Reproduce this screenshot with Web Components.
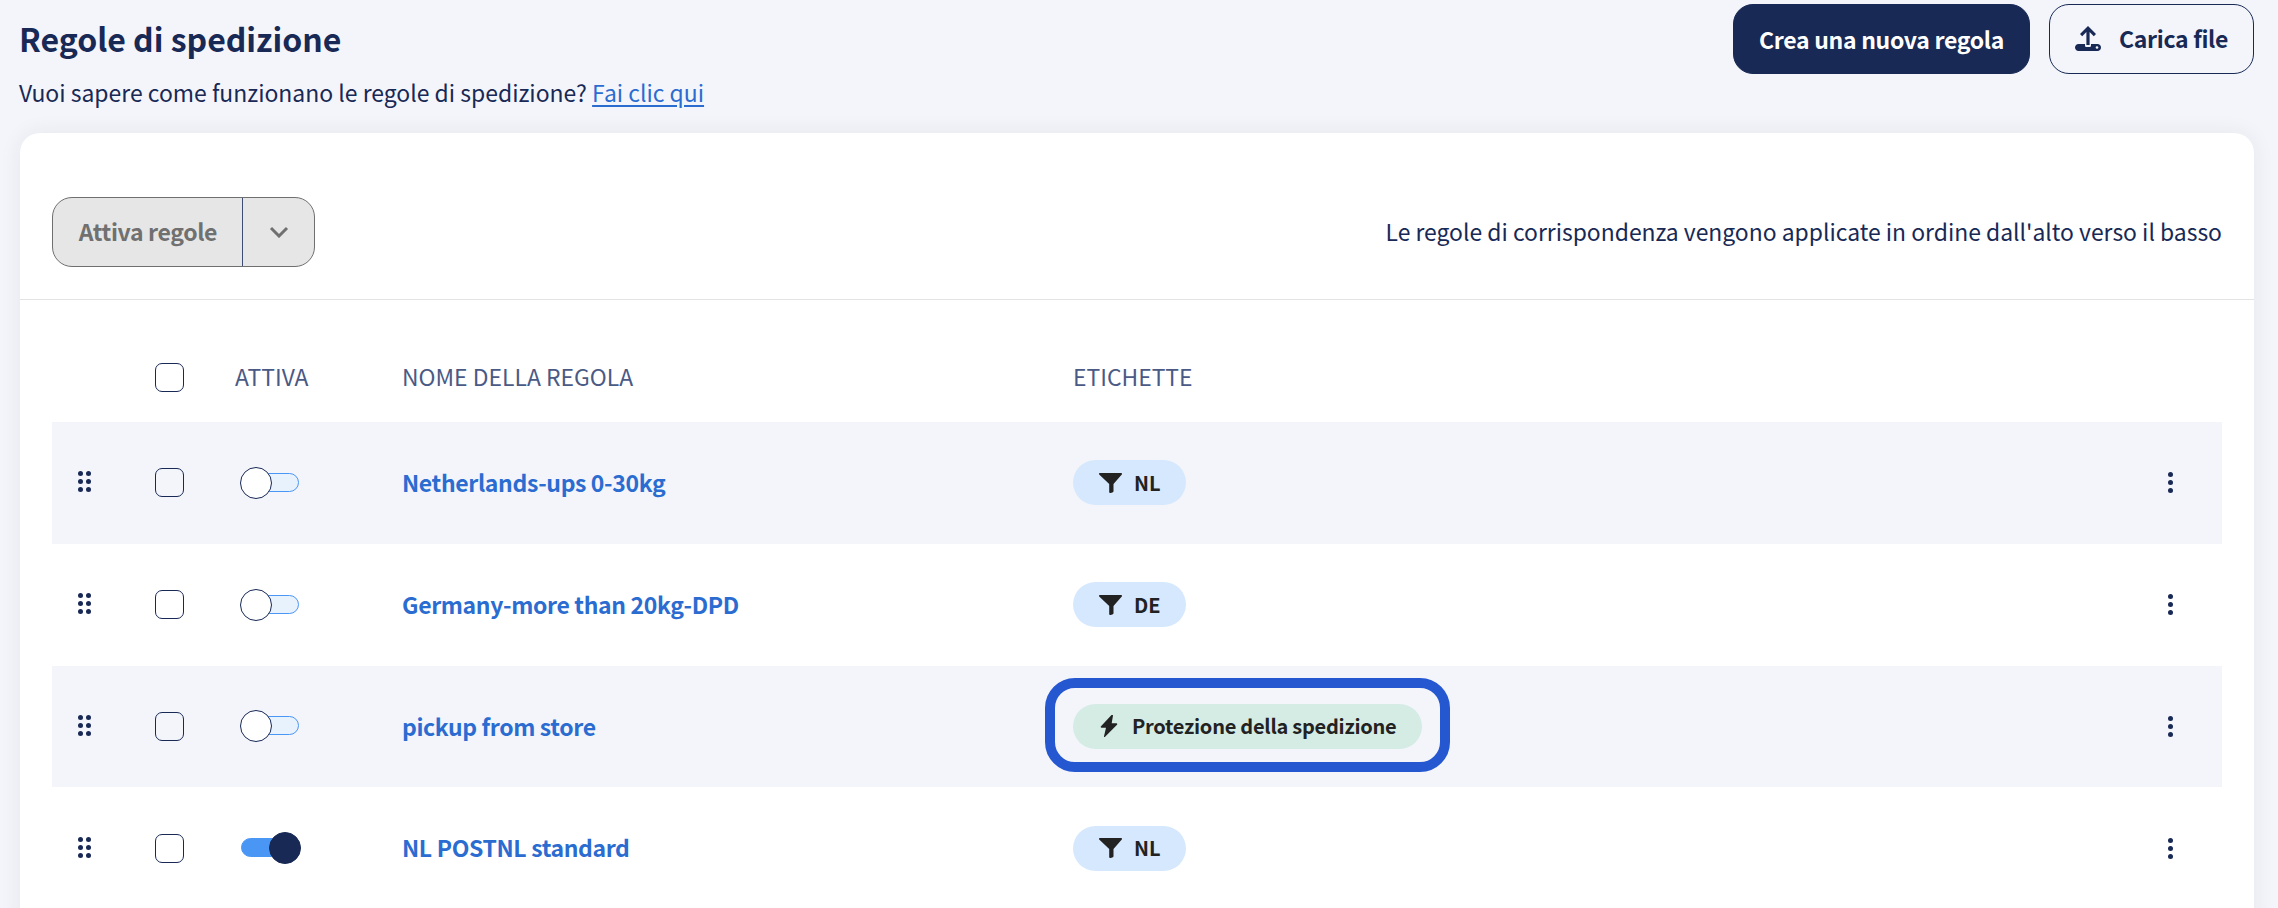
<!DOCTYPE html>
<html lang="it"><head><meta charset="utf-8"><title>Regole di spedizione</title>
<style>
html,body{margin:0;height:908px;overflow:hidden;background:#f4f5fa}
body{font-family:"Noto Sans CJK JP","Noto Sans CJK SC","Source Sans Pro","Noto Sans",sans-serif;color:#182955}
</style></head><body>
<rules-page>
  <page-header slot="header"></page-header>
  <rules-card>
    <rules-toolbar slot="toolbar"></rules-toolbar>
    <rules-head slot="head"></rules-head>
    <rule-row name="Netherlands-ups 0-30kg" tag="NL" shaded></rule-row>
    <rule-row name="Germany-more than 20kg-DPD" tag="DE"></rule-row>
    <rule-row name="pickup from store" tag="Protezione della spedizione" kind="bolt" shaded highlight></rule-row>
    <rule-row name="NL POSTNL standard" tag="NL" on></rule-row>
  </rules-card>
</rules-page>
<script>
const def=(name,css,html)=>customElements.define(name,class extends HTMLElement{
  connectedCallback(){ if(this.shadowRoot) return;
    const r=this.attachShadow({mode:'open'});
    r.innerHTML='<style>'+css+'</style>'+(typeof html==='function'?html(this):html);
  }
});
const GRID='grid-template-columns:103px 80px 167px 671px 1fr 104px;';

def('rules-page',':host{display:block;height:908px;overflow:hidden;padding:4px 24px 0 20px;box-sizing:border-box}',
 '<slot name="header"></slot><slot></slot>');

def('page-header',`:host{display:flex;justify-content:space-between;align-items:flex-start;height:129px}
 .t{margin-left:-1px}
 h1{margin:0;font-size:32px;line-height:44px;font-weight:700;color:#182955;margin-top:12px}
 p{margin:0;font-size:22.950px;line-height:32px;margin-top:16px;color:#182955}
 a{color:#2b6cd1;text-decoration:underline;text-underline-offset:3px}
 .acts{display:flex;gap:19px}`,
 `<div class="t"><h1>Regole di spedizione</h1><p>Vuoi sapere come funzionano le regole di spedizione? <a href="#">Fai clic qui</a></p></div>
  <div class="acts"><action-button primary>Crea una nuova regola</action-button><action-button upload>Carica file</action-button></div>`);

def('action-button',`:host{display:flex;align-items:center;justify-content:center;box-sizing:border-box;height:70px;border-radius:20px;font-size:23px;font-weight:700;line-height:30px;letter-spacing:-.3px;color:#182955;border:1.5px solid #182955}
 :host([primary]){background:#182955;color:#fff;width:297px}
 :host([upload]){width:205px;gap:18px;padding-bottom:3px}
 svg{width:26px;height:26px;flex:none;margin-top:3px}`,
 h=>(h.hasAttribute('upload')?`<svg viewBox="0 0 26 26"><path d="M13 0 5 8l2.200 2.200 4.200-4.100V19h3.200V6.100l4.200 4.100L21 8Z" fill="#182955"/><path d="M3.500 18H10v1.500c0 1 .8 1.500 1.500 1.500h3c.8 0 1.500-.5 1.500-1.500V18h6.500c1.900 0 3.500 1.500 3.500 3.500S24.400 25 22.500 25h-19C1.600 25 0 23.400 0 21.500S1.600 18 3.500 18Z" fill="#182955"/><circle cx="22" cy="21.500" r="1.300" fill="#f4f5fa"/></svg>`:'')+'<slot></slot>');

def('rules-card',`:host{display:block;background:#fff;border-radius:20px 20px 0 0;box-shadow:0 0 22px rgba(24,41,85,.07);height:800px;padding:0 32px;box-sizing:border-box}
 .rows{display:flex;flex-direction:column}`,
 '<slot name="toolbar"></slot><slot name="head"></slot><div class="rows"><slot></slot></div>');

def('rules-toolbar',`:host{display:flex;justify-content:space-between;align-items:center;height:167px;padding-top:64px;padding-bottom:33px;box-sizing:border-box;margin:0 -32px;padding-left:32px;padding-right:32px;border-bottom:1px solid #e3e3e3}
 .note{font-size:22.900px;line-height:32px;color:#182955;padding-bottom:1px}`,
 '<split-button>Attiva regole</split-button><span class="note">Le regole di corrispondenza vengono applicate in ordine dall\'alto verso il basso</span>');

def('split-button',`:host{display:flex;box-sizing:border-box;width:263px;height:70px;border:1.5px solid #6f6f6f;border-radius:20px;background:#e6e6e6;color:#707070;font-size:23px;font-weight:700;line-height:30px;letter-spacing:-.35px}
 .l{width:190px;display:flex;align-items:center;justify-content:center;border-right:1px solid #3d4c74;box-sizing:border-box;padding:0 0 2px 1px}
 .r{flex:1;display:flex;align-items:center;justify-content:center}
 svg{width:20px;height:12px}`,
 `<div class="l"><slot></slot></div><div class="r"><svg viewBox="0 0 20 12"><path d="M2 2l8 8 8-8" fill="none" stroke="#707070" stroke-width="3"/></svg></div>`);

def('rules-head',`:host{display:grid;${GRID}align-items:center;height:122px;padding-top:32px;box-sizing:border-box;font-size:22.900px;line-height:30px;color:#4a5a85}
 span{padding-bottom:2px}`,
 `<span></span><rule-check></rule-check><span>ATTIVA</span><span>NOME DELLA REGOLA</span><span>ETICHETTE</span><span></span>`);

def('rule-check',`:host{display:block;box-sizing:border-box;width:29px;height:29px;border:1.5px solid #182955;border-radius:7px}`,'');

def('rule-row',`:host{display:grid;${GRID}align-items:center;height:121.750px}
 :host([shaded]){background:#f4f5fa}
 .name{font-size:23px;line-height:32px;font-weight:700;letter-spacing:-.36px;color:#2b6cd1;padding-bottom:1.500px}
 .grip{padding-left:26px;display:flex;margin-bottom:2px}
 .tagcell{position:relative;display:flex}
 .mark{position:absolute;left:-28px;top:-26px;width:405px;height:94px;box-sizing:border-box;border:10px solid #2457d0;border-radius:30px;pointer-events:none}
 .kebab{justify-self:center}`,
 h=>`<div class="grip"><dot-grid cols="2"></dot-grid></div>
  <rule-check></rule-check>
  <rule-toggle ${h.hasAttribute('on')?'on':''}></rule-toggle>
  <span class="name">${h.getAttribute('name')}</span>
  <div class="tagcell"><rule-chip kind="${h.getAttribute('kind')||'filter'}">${h.getAttribute('tag')}</rule-chip>${h.hasAttribute('highlight')?'<div class="mark"></div>':''}</div>
  <dot-grid class="kebab" cols="1"></dot-grid>`);

def('dot-grid',`:host{display:inline-grid;grid-auto-rows:5px;row-gap:3px;column-gap:3px}
 i{display:block;width:5px;height:5px;border-radius:50%;background:#182955}`,
 h=>{const c=+h.getAttribute('cols');h.style.gridTemplateColumns=`repeat(${c},5px)`;return '<i></i>'.repeat(c*3)});

def('rule-toggle',`:host{display:block;position:relative;width:61px;height:32px;margin-left:5px}
 .t{position:absolute;left:1px;right:2px;top:6px;height:19px;box-sizing:border-box;border-radius:10px;border:1.5px solid #4a96f5;background:#e8f2fd}
 .k{position:absolute;left:0;top:0;width:32px;height:32px;box-sizing:border-box;border-radius:50%;border:1.5px solid #182955;background:#fff}
 :host([on]) .t{background:#4a96f5}
 :host([on]) .k{left:29px;background:#182955}`,
 '<div class="t"></div><div class="k"></div>');

def('rule-chip',`:host{display:inline-flex;align-items:center;box-sizing:border-box;height:45px;border-radius:23px;padding:0 26px;gap:12px;background:#d6e8fd;color:#222;font-size:20px;font-weight:700;line-height:26px;letter-spacing:-.1px}
 :host([kind=bolt]){background:#d4ece4;padding:0 26px 0 27px;gap:14px;letter-spacing:-.25px}
 svg{flex:none;display:block}`,
 h=>(h.getAttribute('kind')==='bolt'
  ?'<svg width="18" height="22" viewBox="0 0 18 22"><path d="M11.500 0 1 11.200c-.6.700-.2 1.600.7 1.600H6L4 21.200c-.2.700.6 1.100 1.100.5L17 9.800c.6-.6.200-1.500-.7-1.500H11.700L13 .6c.1-.7-1-1.100-1.500-.6Z" fill="#222"/></svg>'
  :'<svg width="23" height="20" viewBox="0 0 23 20"><path d="M1 0h21c.8 0 1.300.9.800 1.600L14.500 11v7.200c0 .5-.2.8-.6 1l-2.200 .8c-.7.2-1.500-.2-1.500-1V11L.2 1.600C-.3.900.2 0 1 0Z" fill="#222"/></svg>')+'<slot></slot>');
</script>
</body></html>
